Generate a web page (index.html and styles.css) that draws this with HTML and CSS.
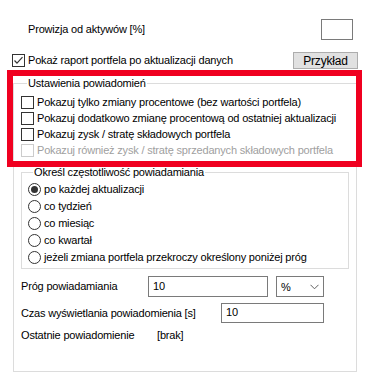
FILE: index.html
```html
<!DOCTYPE html>
<html lang="pl">
<head>
  <meta charset="UTF-8" />
  <title>Ustawienia powiadomień</title>
  <link rel="stylesheet" href="styles.css">
</head>
<body>
<div class="panel">

  <!-- prowizja -->
  <div class="row commission">
    <span class="label">Prowizja od aktywów [%]</span>
    <div class="textbox small"></div>
  </div>

  <!-- raport -->
  <div class="row report">
    <span class="check checked">
      <svg width="13" height="13" viewBox="0 0 13 13"><polyline points="2.5,6.5 5,9.2 10.5,3.2" fill="none" stroke="#333" stroke-width="1.2"/></svg>
    </span>
    <span class="label">Pokaż raport portfela po aktualizacji danych</span>
    <button class="btn">Przykład</button>
  </div>

  <fieldset class="group settings">
    <legend>Ustawienia powiadomień</legend>

    <div class="option"><span class="check"></span><span class="label">Pokazuj tylko zmiany procentowe (bez wartości portfela)</span></div>
    <div class="option"><span class="check"></span><span class="label">Pokazuj dodatkowo zmianę procentową od ostatniej aktualizacji</span></div>
    <div class="option"><span class="check"></span><span class="label">Pokazuj zysk / stratę składowych portfela</span></div>
    <div class="option disabled"><span class="check"></span><span class="label">Pokazuj również zysk / stratę sprzedanych składowych portfela</span></div>

    <fieldset class="group frequency">
      <legend>Określ częstotliwość powiadamiania</legend>
      <div class="option radio-row"><span class="radio on"></span><span class="label">po każdej aktualizacji</span></div>
      <div class="option radio-row"><span class="radio"></span><span class="label">co tydzień</span></div>
      <div class="option radio-row"><span class="radio"></span><span class="label">co miesiąc</span></div>
      <div class="option radio-row"><span class="radio"></span><span class="label">co kwartał</span></div>
      <div class="option radio-row"><span class="radio"></span><span class="label">jeżeli zmiana portfela przekroczy określony poniżej próg</span></div>
    </fieldset>

    <div class="row field threshold">
      <span class="label name">Próg powiadamiania</span>
      <div class="textbox wide">10</div>
      <div class="combo">
        <span>%</span>
        <svg width="9" height="6" viewBox="0 0 9 6"><polyline points="0.5,0.8 4.5,4.8 8.5,0.8" fill="none" stroke="#606060" stroke-width="1"/></svg>
      </div>
    </div>

    <div class="row field duration">
      <span class="label name">Czas wyświetlania powiadomienia [s]</span>
      <div class="textbox">10</div>
    </div>

    <div class="row field last">
      <span class="label name">Ostatnie powiadomienie</span>
      <span class="label">[brak]</span>
    </div>
  </fieldset>

  <!-- zaznaczenie -->
  <div class="highlight"></div>
</div>
</body>
</html>
```

FILE: styles.css
```css
* {
  margin: 0;
  padding: 0;
  box-sizing: border-box;
}

body {
  background: #fff;
  font-family: "Liberation Sans", Arial, sans-serif;
  font-size: 11px;
  letter-spacing: -0.18px;
  color: #000;
}

.panel {
  position: relative;
  width: 376px;
  height: 391px;
  padding-top: 19px;
}

.row {
  display: flex;
  align-items: center;
}

.label {
  white-space: nowrap;
  line-height: 13px;
}

.commission {
  height: 21px;
  padding-left: 28px;
}

.textbox {
  height: 21px;
  border: 1px solid #7a7a7a;
  background: #fff;
  padding: 2px 0 0 4px;
  line-height: 15px;
}

.textbox.small {
  width: 32px;
  margin-left: auto;
  margin-right: 23px;
}

.report {
  height: 17px;
  margin-top: 12px;
  padding-left: 12px;
}

.check {
  width: 13px;
  height: 13px;
  border: 1px solid #333;
  background: #fff;
  margin-right: 3px;
  flex: none;
  position: relative;
}

.check svg {
  position: absolute;
  left: -1px;
  top: -1px;
}

.btn {
  margin-left: auto;
  margin-right: 18px;
  width: 65px;
  height: 17px;
  background: #e1e1e1;
  border: 1px solid #adadad;
  font-family: inherit;
  font-size: 12px;
  letter-spacing: inherit;
  color: #000;
  line-height: 14px;
}

.group {
  border: 1px solid #dcdcdc;
}

.group legend {
  line-height: 13px;
  padding: 0 1px;
  margin-left: 6px;
}

.settings {
  margin: 8px 0 0 13px;
  width: 344px;
  height: 295px;
  padding: 4px 6px 0 7px;
}

.option {
  display: flex;
  align-items: center;
  height: 16px;
}

.option.disabled {
  color: #a0a0a0;
}

.option.disabled .check {
  border-color: #ccc;
}

.frequency {
  margin-top: 8px;
  width: 328px;
  padding: 2px 0 2px 6px;
}

.frequency legend {
  margin-left: 5px;
}

.radio-row {
  height: 17px;
}

.radio {
  width: 13px;
  height: 13px;
  border: 1px solid #333;
  border-radius: 50%;
  background: #fff;
  margin-right: 3px;
  flex: none;
  display: flex;
  align-items: center;
  justify-content: center;
}

.radio.on::after {
  content: "";
  width: 7px;
  height: 7px;
  border-radius: 50%;
  background: #333;
}

.field .name {
  width: 127px;
}

.threshold {
  margin-top: 7px;
  height: 21px;
}

.textbox.wide {
  width: 120px;
}

.combo {
  width: 48px;
  height: 21px;
  margin-left: 8px;
  border: 1px solid #7a7a7a;
  display: flex;
  align-items: center;
  justify-content: space-between;
  padding: 0 4px 0 4px;
}

.duration {
  margin-top: 6px;
  height: 20px;
}

.duration .name {
  width: 200px;
}

.duration .textbox {
  width: 103px;
  height: 20px;
  padding-top: 1px;
}

.last {
  margin-top: 6px;
  height: 13px;
}

.last .name {
  width: 136px;
}

.highlight {
  position: absolute;
  left: 7px;
  top: 70px;
  width: 355px;
  height: 97px;
  border: 6px solid #f00020;
}
```
